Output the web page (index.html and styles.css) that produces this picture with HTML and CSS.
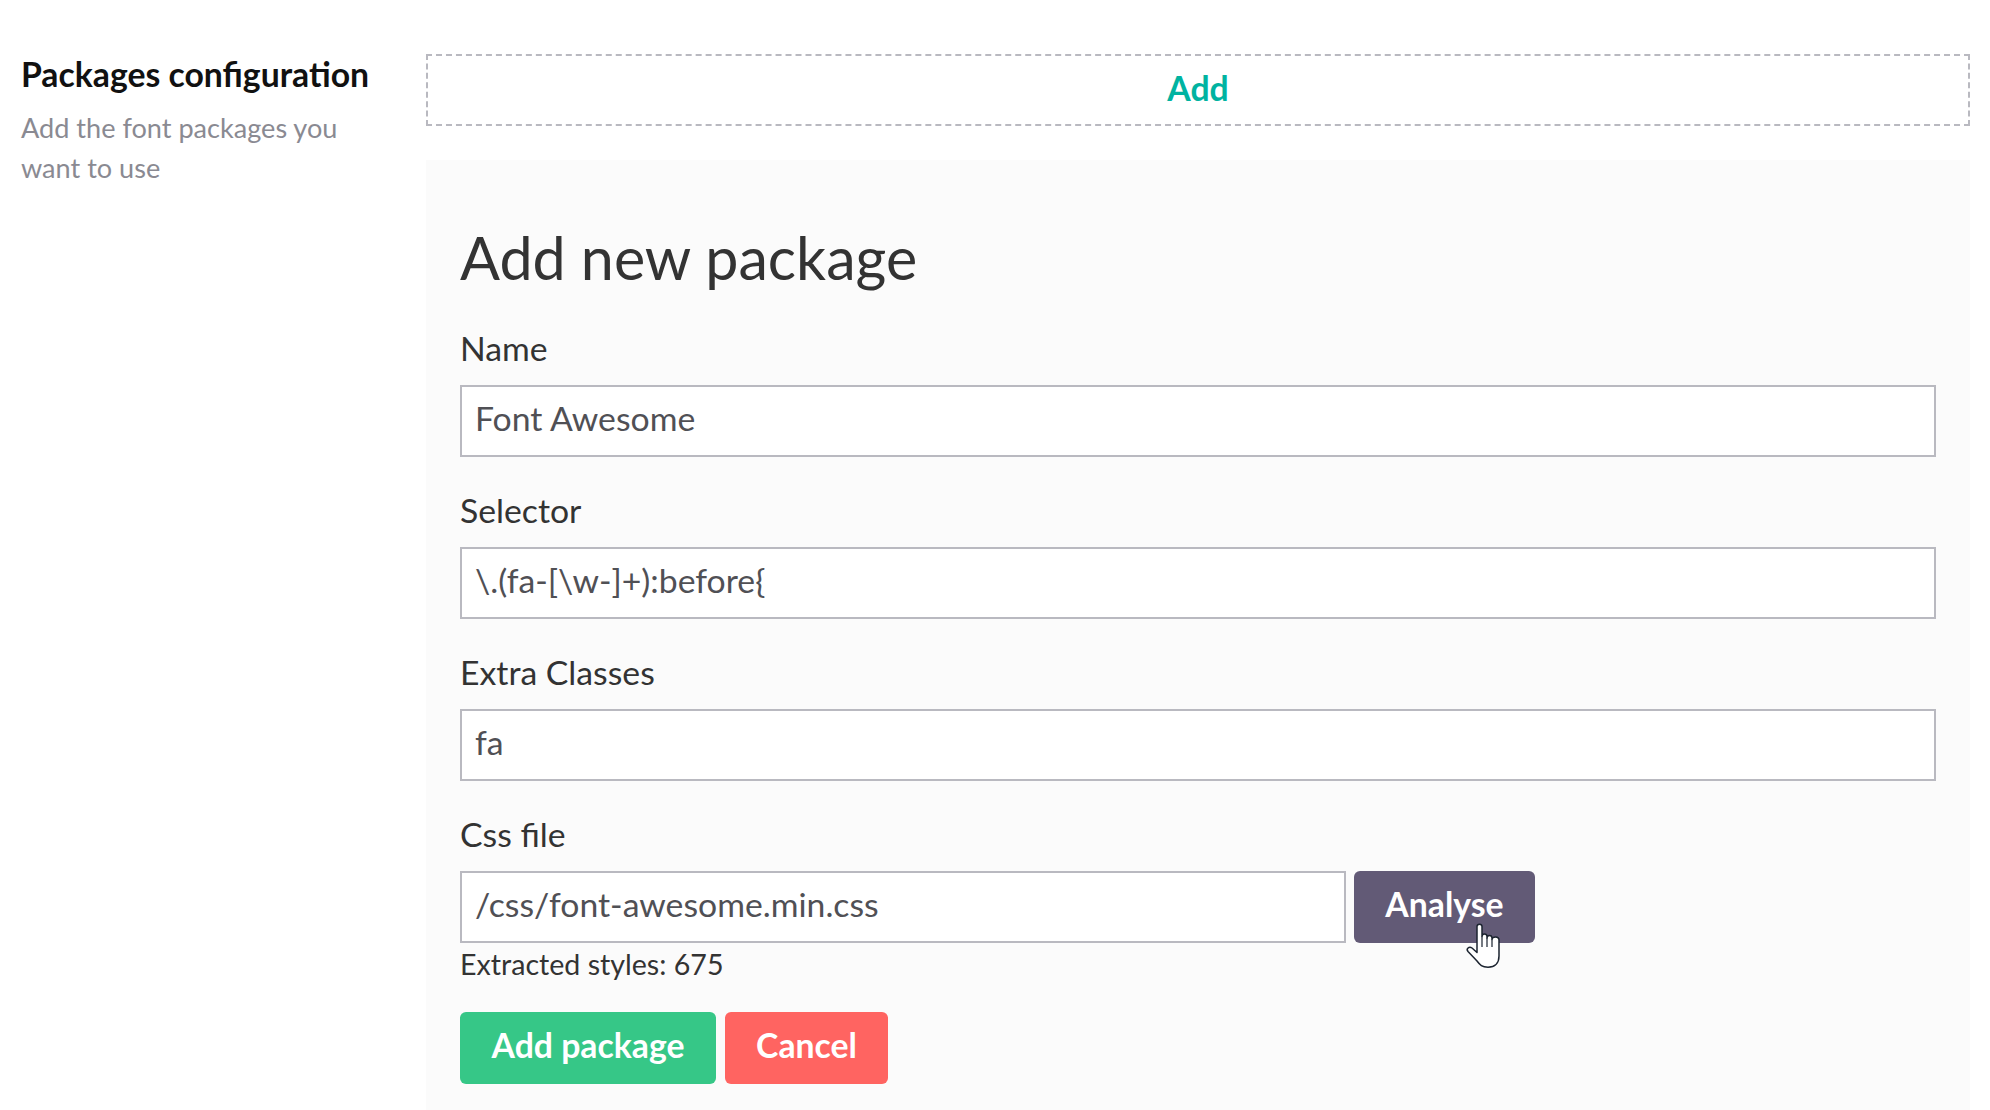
FILE: index.html
```html
<!DOCTYPE html>
<html lang="en">
<head>
<meta charset="utf-8">
<title>Packages configuration</title>
<link rel="stylesheet" href="styles.css">
</head>
<body>
<main class="page">
  <aside class="intro">
    <h2 class="intro-title">Packages configuration</h2>
    <p class="intro-text">Add the font packages you want to use</p>
  </aside>
  <section class="content">
    <a class="add-box">Add</a>
    <form class="panel">
      <h1 class="panel-title">Add new package</h1>
      <div class="field">
        <label class="label">Name</label>
        <input class="input" type="text" value="Font Awesome">
      </div>
      <div class="field">
        <label class="label">Selector</label>
        <input class="input" type="text" value="\.(fa-[\w-]+):before{">
      </div>
      <div class="field">
        <label class="label">Extra Classes</label>
        <input class="input" type="text" value="fa">
      </div>
      <div class="field field-last">
        <label class="label">Css file</label>
        <div class="file-row">
          <input class="input input-file" type="text" value="/css/font-awesome.min.css">
          <button class="btn btn-analyse" type="button">Analyse
            <svg class="cursor" viewBox="-1 -1 36 47" width="36" height="47" aria-hidden="true">
              <path d="M11 3.500C11 .5 16 .5 16 3.500V13.500C16 10 21 10 21 13.500V15C21 11.500 26 11.500 26 15V16.500C26 13 33 13 33 17V33C33 40 29 44.200 22 44.200C16 44.200 14 42 11 38L2 28.500C-.2 26 3 23 6 25L11 29.500Z" fill="#fff" stroke="#1c2430" stroke-width="1.500" stroke-linejoin="round"/>
              <path d="M16 13.500V24M21 15V24M26 16.500V24" fill="none" stroke="#1c2430" stroke-width="1.200"/>
            </svg>
          </button>
        </div>
        <p class="extracted">Extracted styles: 675</p>
      </div>
      <div class="actions">
        <button class="btn btn-add" type="button">Add package</button>
        <button class="btn btn-cancel" type="button">Cancel</button>
      </div>
    </form>
  </section>
</main>
</body>
</html>
```

FILE: styles.css
```css
* { box-sizing: border-box; }
html, body { margin: 0; height: 100%; }
body {
  background: #fff;
  font-family: "Lato", "Liberation Sans", sans-serif;
  color: #333;
  overflow: hidden;
  text-rendering: optimizeLegibility;
  font-feature-settings: "liga" 1;
}
.page {
  display: flex;
  padding: 54px 20px 0 21px;
  height: 1110px;
}
.intro { width: 405px; flex: none; }
.intro-title {
  margin: 0;
  font-size: 33.75px;
  line-height: 40px;
  font-weight: 700;
  color: #111;
}
.intro-text {
  margin: 14px 0 0;
  font-size: 27.1px;
  line-height: 40px;
  width: 340px;
  color: #8a8a92;
}
.content { flex: 1; display: flex; flex-direction: column; }
.add-box {
  display: block;
  height: 72px;
  border: 2px dashed #b9b9c0;
  text-align: center;
  color: #00b3a1;
  font-size: 33.75px;
  font-weight: 700;
  line-height: 64px;
}
.panel {
  flex: 1;
  margin-top: 34px;
  background: #fbfbfb;
  padding: 63px 34px 0;
}
.panel-title {
  margin: 0 0 35px;
  font-size: 59.2px;
  line-height: 70px;
  font-weight: 400;
  color: #333;
}
.field { margin-bottom: 33px; }
.field-last { margin-bottom: 0; }
.label {
  display: block;
  font-size: 33.75px;
  line-height: 40px;
  margin-bottom: 17px;
  color: #333;
}
.input {
  display: block;
  width: 100%;
  height: 72px;
  border: 2px solid #b9b9c0;
  background: #fff;
  padding: 0 13px 7px;
  font-family: inherit;
  font-size: 33.75px;
  color: #505055;
  border-radius: 0;
  outline: none;
}
.file-row { display: flex; gap: 8px; }
.input-file { width: 886px; flex: none; }
.extracted {
  margin: 1px 0 0;
  font-size: 28.6px;
  line-height: 40px;
  color: #333;
}
.actions { display: flex; gap: 9px; margin-top: 28px; }
.btn {
  height: 72px;
  border: 0;
  border-radius: 6px;
  color: #fff;
  font-family: inherit;
  font-size: 33.75px;
  font-weight: 700;
  padding: 0 0 7px;
  position: relative;
}
.btn-analyse { width: 181px; background: #625a76; }
.btn-add { width: 256px; background: #36c787; }
.btn-cancel { width: 163px; background: #ff6461; }
.cursor { position: absolute; left: 111px; top: 51px; }
```
